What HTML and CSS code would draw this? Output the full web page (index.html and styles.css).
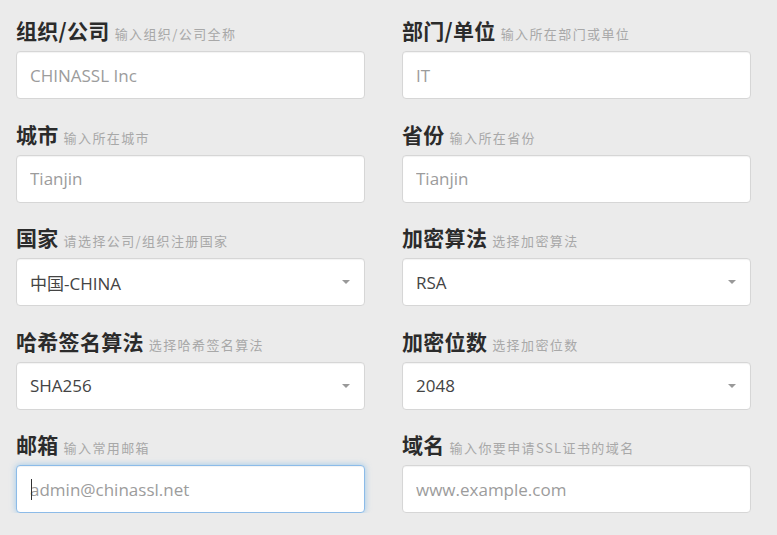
FILE: index.html
```html
<!DOCTYPE html>
<html lang="zh-CN">
<head>
<meta charset="utf-8">
<title>CSR</title>
<link rel="stylesheet" href="styles.css">
</head>
<body>
<form class="form">
  <div class="field">
    <label class="label"><span class="title">组织/公司</span><span class="hint">输入组织/公司全称</span></label>
    <input class="control" type="text" placeholder="CHINASSL Inc">
  </div>
  <div class="field">
    <label class="label"><span class="title">部门/单位</span><span class="hint">输入所在部门或单位</span></label>
    <input class="control" type="text" placeholder="IT">
  </div>
  <div class="field">
    <label class="label"><span class="title">城市</span><span class="hint">输入所在城市</span></label>
    <input class="control" type="text" placeholder="Tianjin">
  </div>
  <div class="field">
    <label class="label"><span class="title">省份</span><span class="hint">输入所在省份</span></label>
    <input class="control" type="text" placeholder="Tianjin">
  </div>
  <div class="field">
    <label class="label"><span class="title">国家</span><span class="hint">请选择公司/组织注册国家</span></label>
    <div class="select"><span class="value">中国-CHINA</span><span class="arrow"></span></div>
  </div>
  <div class="field">
    <label class="label"><span class="title">加密算法</span><span class="hint">选择加密算法</span></label>
    <div class="select"><span class="value">RSA</span><span class="arrow"></span></div>
  </div>
  <div class="field">
    <label class="label"><span class="title">哈希签名算法</span><span class="hint">选择哈希签名算法</span></label>
    <div class="select"><span class="value">SHA256</span><span class="arrow"></span></div>
  </div>
  <div class="field">
    <label class="label"><span class="title">加密位数</span><span class="hint">选择加密位数</span></label>
    <div class="select"><span class="value">2048</span><span class="arrow"></span></div>
  </div>
  <div class="field">
    <label class="label"><span class="title">邮箱</span><span class="hint">输入常用邮箱</span></label>
    <div class="control focus"><span class="caret"></span><span class="ph">admin@chinassl.net</span></div>
  </div>
  <div class="field">
    <label class="label"><span class="title">域名</span><span class="hint">输入你要申请SSL证书的域名</span></label>
    <input class="control" type="text" placeholder="www.example.com">
  </div>
</form>
</body>
</html>
```

FILE: styles.css
```css
html, body {
  margin: 0;
  padding: 0;
  background: #ebebeb;
}
body {
  font-family: "Open Sans", "Noto Sans CJK SC", sans-serif;
  color: #333;
}
.form {
  display: grid;
  grid-template-columns: 349px 349px;
  column-gap: 37px;
  row-gap: 19.5px;
  padding: 15px 0 0 16px;
}
.field {
  display: flex;
  flex-direction: column;
}
.label {
  display: flex;
  align-items: baseline;
  height: 30px;
  line-height: 30px;
  margin-bottom: 6px;
  white-space: nowrap;
}
.title {
  font-family: "Noto Sans CJK SC", sans-serif;
  font-weight: 700;
  font-size: 21px;
  color: #2b2b2b;
  letter-spacing: 0.3px;
}
.hint {
  font-family: "Noto Sans CJK SC", sans-serif;
  font-size: 13px;
  color: #a8a8a8;
  margin-left: 5px;
  letter-spacing: 1.4px;
}
.control, .select {
  box-sizing: border-box;
  height: 48px;
  width: 100%;
  margin: 0;
  padding: 0 13px;
  background: #fff;
  border: 1px solid #d6d6d6;
  border-radius: 4px;
  box-shadow: inset 0 1px 1px rgba(0,0,0,0.05);
  font-family: "Open Sans", "Noto Sans CJK SC", sans-serif;
  font-size: 17px;
  color: #555;
  outline: none;
}
.control::placeholder {
  color: #9c9c9c;
}
.select {
  display: flex;
  align-items: center;
  justify-content: space-between;
  padding-right: 14px;
}
.value {
  color: #444;
}
.arrow {
  width: 0;
  height: 0;
  border-left: 4px solid transparent;
  border-right: 4px solid transparent;
  border-top: 4px solid #999;
}
.focus {
  display: flex;
  align-items: center;
  position: relative;
  border-color: #8cbbe8;
  box-shadow: inset 0 1px 1px rgba(0,0,0,0.05), 0 0 6px rgba(102,175,233,0.6);
}
.ph {
  color: #9c9c9c;
}
.caret {
  position: absolute;
  left: 14px;
  top: 13px;
  width: 1px;
  height: 21px;
  background: #333;
}
```
